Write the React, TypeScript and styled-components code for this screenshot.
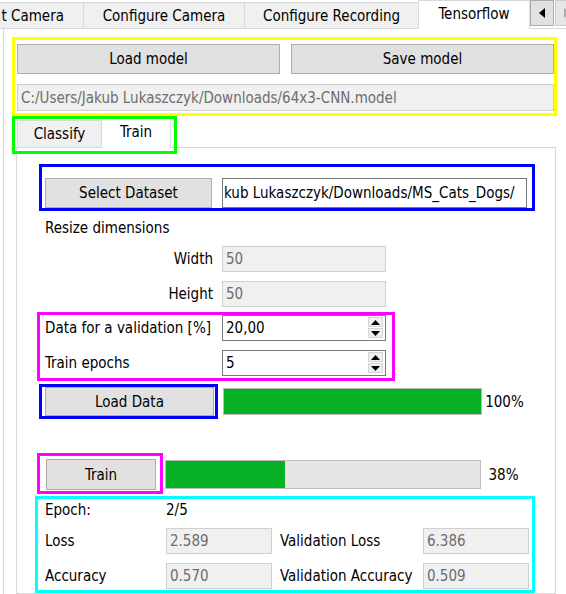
import React from "react";
import styled, { createGlobalStyle, css } from "styled-components";

const GlobalStyle = createGlobalStyle`
  html, body { margin: 0; padding: 0; background: #ffffff; }
  body {
    font-family: "DejaVu Sans Condensed", "Liberation Sans", sans-serif;
    font-size: 15px;
    color: #000;
  }
  *, *::before, *::after { box-sizing: border-box; }
`;

const Window = styled.div`
  width: 566px;
  height: 594px;
  overflow: hidden;
  background: #fff;
  display: flex;
  flex-direction: column;
`;

const TabBar = styled.div<{ $h: number }>`
  display: flex;
  align-items: flex-end;
  height: ${(p) => p.$h + 1}px;
  border-bottom: 1px solid #d9d9d9;
  flex-shrink: 0;
`;

const Tab = styled.div<{ $w: number; $h: number; $active?: boolean }>`
  width: ${(p) => p.$w}px;
  height: ${(p) => p.$h}px;
  flex-shrink: 0;
  display: flex;
  align-items: center;
  justify-content: center;
  white-space: nowrap;
  background: #f0f0f0;
  border: 1px solid #d9d9d9;
  border-bottom: none;
  margin-right: -1px;
  ${(p) =>
    p.$active &&
    css`
      height: ${p.$h + 3}px;
      margin-bottom: -1px;
      padding-bottom: 3px;
      background: #fff;
      position: relative;
      z-index: 1;
    `}
`;

const ClippedTab = styled(Tab)`
  justify-content: flex-end;
  padding-right: 19px;
  border-left: none;
`;

const ScrollBtn = styled.div<{ $disabled?: boolean }>`
  width: 24px;
  height: 26px;
  flex-shrink: 0;
  align-self: flex-start;
  margin-left: 1px;
  background: ${(p) => (p.$disabled ? "#e6e6e6" : "#e1e1e1")};
  border: 1px solid ${(p) => (p.$disabled ? "#cccccc" : "#adadad")};
  display: flex;
  align-items: center;
  justify-content: center;
`;

const Pane = styled.div`
  flex: 1;
  margin-left: 3px;
  border-left: 1px solid #d9d9d9;
  display: flex;
  flex-direction: column;
  padding: 15px 10px 0 12px;
  min-height: 0;
`;

const Mark = styled.div<{ $c: string; $i: string; $col?: boolean }>`
  position: relative;
  display: flex;
  flex-direction: ${(p) => (p.$col ? "column" : "row")};
  align-items: ${(p) => (p.$col ? "stretch" : "flex-end")};
  &::after {
    content: "";
    position: absolute;
    inset: ${(p) => p.$i};
    border: 3px solid ${(p) => p.$c};
    pointer-events: none;
    z-index: 5;
  }
`;

const ModelSection = styled(Mark)`
  margin: 0 2px 0 1px;
  gap: 10px;
`;

const ButtonRow = styled.div`
  display: flex;
  gap: 11px;
`;

const Button = styled.div<{ $w?: number; $h: number }>`
  ${(p) => (p.$w ? `width: ${p.$w}px;` : "flex: 1;")}
  height: ${(p) => p.$h}px;
  flex-shrink: 0;
  background: #e1e1e1;
  border: 1px solid #adadad;
  display: flex;
  align-items: center;
  justify-content: center;
  white-space: nowrap;
`;

const Field = styled.div<{ $ro?: boolean; $w?: number; $h: number; $pad?: number }>`
  ${(p) => (p.$w ? `width: ${p.$w}px;` : "flex: 1;")}
  height: ${(p) => p.$h}px;
  flex-shrink: 0;
  background: ${(p) => (p.$ro ? "#f0f0f0" : "#ffffff")};
  border: 1px solid ${(p) => (p.$ro ? "#cfcfcf" : "#7a7a7a")};
  color: ${(p) => (p.$ro ? "#6d6d6d" : "#000")};
  padding-left: ${(p) => p.$pad ?? 3}px;
  display: flex;
  align-items: center;
  overflow: hidden;
  white-space: nowrap;
`;

const PathField = styled(Field)`
  flex: none;
`;

const InnerTabs = styled.div`
  margin-top: 7px;
  flex: 1;
  display: flex;
  flex-direction: column;
`;

const TabGroup = styled(Mark)`
  margin-left: 1px;
  align-self: stretch;
`;

const InnerPane = styled.div`
  flex: 1;
  border: 1px solid #d9d9d9;
  border-top: none;
  padding: 30px 28px 0 28px;
  display: flex;
  flex-direction: column;
`;

const DatasetRow = styled(Mark)`
  gap: 10px;
`;

const SectionLabel = styled.div`
  margin-top: 12px;
  height: 17px;
  line-height: 17px;
`;

const FormRow = styled.div<{ $mt?: number }>`
  display: flex;
  align-items: center;
  margin-top: ${(p) => p.$mt ?? 0}px;
`;

const Label = styled.div<{ $w: number; $right?: boolean }>`
  width: ${(p) => p.$w}px;
  flex-shrink: 0;
  margin-right: 9px;
  text-align: ${(p) => (p.$right ? "right" : "left")};
  white-space: nowrap;
`;

const SpinGroup = styled(Mark)`
  margin-top: 8px;
  align-self: flex-start;
`;

const SpinText = styled.div`
  flex: 1;
`;

const SpinArrows = styled.div`
  width: 15px;
  align-self: stretch;
  margin: 1px 2px 2px 0;
  display: flex;
  flex-direction: column;
  gap: 1px;
`;

const SpinArrow = styled.div`
  flex: 1;
  background: #efefef;
  border: 1px solid #d4d4d4;
  display: flex;
  align-items: center;
  justify-content: center;
`;

const ButtonMark = styled(Mark)<{ $ml?: number }>`
  margin-left: ${(p) => p.$ml ?? 0}px;
  margin-right: 9px;
`;

const Bar = styled.div<{ $w: number; $h: number }>`
  width: ${(p) => p.$w}px;
  height: ${(p) => p.$h}px;
  background: #e6e6e6;
  border: 1px solid #bcbcbc;
  flex-shrink: 0;
  display: flex;
`;

const Fill = styled.div`
  height: 100%;
  background: #06b025;
`;

const Pct = styled.div`
  width: 45px;
  text-align: center;
  flex-shrink: 0;
`;

const ResultsMark = styled(Mark)`
  margin-top: 12px;
  align-self: flex-start;
`;

const Results = styled.div`
  display: grid;
  grid-template-columns: 121px 106px 151px 106px;
  grid-template-rows: 17px 26px 26px;
  row-gap: 9px;
  align-items: center;
`;

const Cell = styled.div<{ $indent?: number }>`
  padding-left: ${(p) => p.$indent ?? 0}px;
  white-space: nowrap;
  line-height: 17px;
`;

const Tri = ({ dir, color, w, h }: { dir: "up" | "down" | "left" | "right"; color: string; w: number; h: number }) => {
  const pts =
    dir === "up"
      ? `0,${h} ${w / 2},0 ${w},${h}`
      : dir === "down"
      ? `0,0 ${w},0 ${w / 2},${h}`
      : dir === "left"
      ? `${w},0 ${w},${h} 0,${h / 2}`
      : `0,0 ${w},${h / 2} 0,${h}`;
  return (
    <svg width={w} height={h} viewBox={`0 0 ${w} ${h}`}>
      <polygon points={pts} fill={color} />
    </svg>
  );
};

const SpinBox = ({ value }: { value: string }) => (
  <Field $w={164} $h={26}>
    <SpinText>{value}</SpinText>
    <SpinArrows>
      <SpinArrow>
        <Tri dir="up" color="#000" w={9} h={5} />
      </SpinArrow>
      <SpinArrow>
        <Tri dir="down" color="#000" w={9} h={5} />
      </SpinArrow>
    </SpinArrows>
  </Field>
);

const Progress = ({ w, h, value }: { w: number; h: number; value: number }) => (
  <>
    <Bar $w={w} $h={h}>
      <Fill style={{ width: `${value}%` }} />
    </Bar>
    <Pct>{value}%</Pct>
  </>
);

export default function App() {
  return (
    <Window>
      <GlobalStyle />
      <TabBar $h={28}>
        <ClippedTab $w={84} $h={26}>t Camera</ClippedTab>
        <Tab $w={162} $h={26}>Configure Camera</Tab>
        <Tab $w={175} $h={26}>Configure Recording</Tab>
        <Tab $w={112} $h={26} $active>
          Tensorflow
        </Tab>
        <ScrollBtn>
          <Tri dir="left" color="#000" w={6} h={10} />
        </ScrollBtn>
        <ScrollBtn $disabled>
          <Tri dir="right" color="#a8a8a8" w={6} h={10} />
        </ScrollBtn>
      </TabBar>
      <Pane>
        <ModelSection $col $c="#ffff00" $i="-7px -3px -5px -5px">
          <ButtonRow>
            <Button $h={30}>Load model</Button>
            <Button $h={30}>Save model</Button>
          </ButtonRow>
          <PathField $ro $h={27}>
            C:/Users/Jakub Lukaszczyk/Downloads/64x3-CNN.model
          </PathField>
        </ModelSection>
        <InnerTabs>
          <TabBar $h={29}>
            <TabGroup $c="#00ff00" $i="-2px -7px -7px -5px">
              <Tab $w={85} $h={27}>Classify</Tab>
              <Tab $w={70} $h={27} $active>
                Train
              </Tab>
            </TabGroup>
          </TabBar>
          <InnerPane>
            <DatasetRow $c="#0000ff" $i="-14px -8px -3px -6px">
              <Button $w={167} $h={30}>
                Select Dataset
              </Button>
              <Field $h={30} $pad={1}>
                kub Lukaszczyk/Downloads/MS_Cats_Dogs/
              </Field>
            </DatasetRow>
            <SectionLabel>Resize dimensions</SectionLabel>
            <FormRow $mt={9}>
              <Label $w={168} $right>
                Width
              </Label>
              <Field $ro $w={164} $h={26}>
                50
              </Field>
            </FormRow>
            <FormRow $mt={9}>
              <Label $w={168} $right>
                Height
              </Label>
              <Field $ro $w={164} $h={26}>
                50
              </Field>
            </FormRow>
            <SpinGroup $col $c="#ff00ff" $i="-3px -9px -5px -8px">
              <FormRow>
                <Label $w={168}>Data for a validation [%]</Label>
                <SpinBox value="20,00" />
              </FormRow>
              <FormRow $mt={9}>
                <Label $w={168}>Train epochs</Label>
                <SpinBox value="5" />
              </FormRow>
            </SpinGroup>
            <FormRow $mt={11}>
              <ButtonMark $c="#0000ff" $i="-3px -4px -3px -6px">
                <Button $w={169} $h={29}>
                  Load Data
                </Button>
              </ButtonMark>
              <Progress w={259} h={27} value={100} />
            </FormRow>
            <FormRow $mt={43}>
              <ButtonMark $ml={1} $c="#ff00ff" $i="-6px -7px -4px -9px">
                <Button $w={110} $h={31}>
                  Train
                </Button>
              </ButtonMark>
              <Progress w={316} h={29} value={38} />
            </FormRow>
            <ResultsMark $c="#00ffff" $i="-6px -6px -4px -10px">
              <Results>
                <Cell>Epoch:</Cell>
                <Cell>2/5</Cell>
                <Cell />
                <Cell />
                <Cell>Loss</Cell>
                <Field $ro $h={26}>
                  2.589
                </Field>
                <Cell $indent={8}>Validation Loss</Cell>
                <Field $ro $h={26}>
                  6.386
                </Field>
                <Cell>Accuracy</Cell>
                <Field $ro $h={26}>
                  0.570
                </Field>
                <Cell $indent={8}>Validation Accuracy</Cell>
                <Field $ro $h={26}>
                  0.509
                </Field>
              </Results>
            </ResultsMark>
          </InnerPane>
        </InnerTabs>
      </Pane>
    </Window>
  );
}
